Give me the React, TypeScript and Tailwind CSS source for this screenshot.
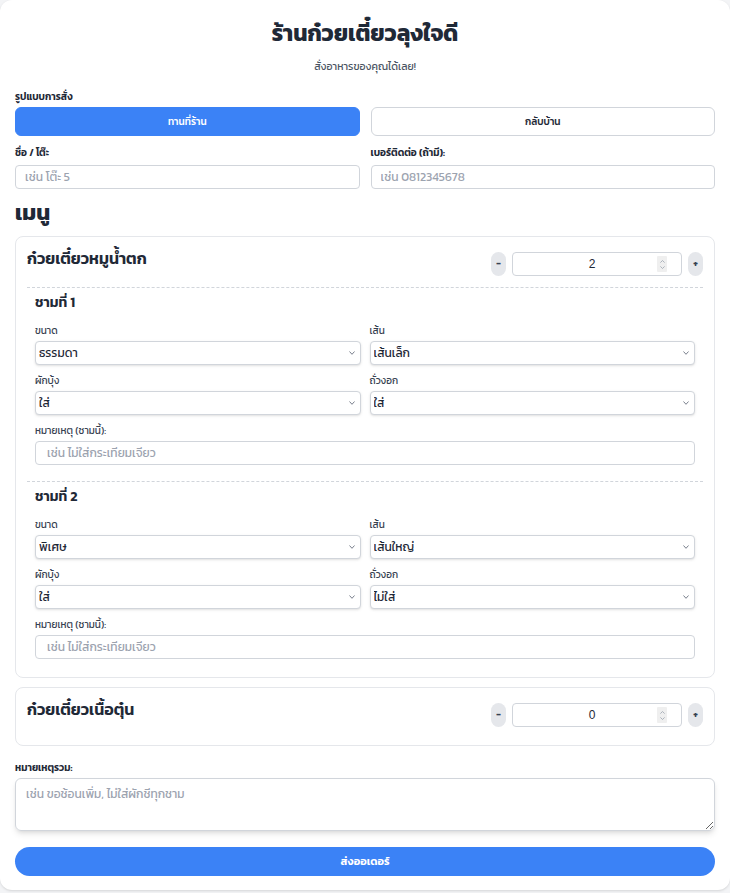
import { useState } from "react";

interface Bowl {
  size: string;
  noodle: string;
  veg: string;
  sprout: string;
  note: string;
}

const sizes = ["ธรรมดา", "พิเศษ"];
const noodles = ["เส้นเล็ก", "เส้นใหญ่", "เส้นหมี่", "บะหมี่", "วุ้นเส้น"];
const yesNo = ["ใส่", "ไม่ใส่"];

const Field = ({ label, children }: { label: string; children: React.ReactNode }) => (
  <div className="flex flex-col">
    <label className="text-[10px] leading-[14px] text-[#374151] mb-[3px]">{label}</label>
    {children}
  </div>
);

// native select, small grey chevron like the browser one
const Select = ({ value, options }: { value: string; options: string[] }) => (
  <div className="relative">
    <select
      defaultValue={value}
      className="block appearance-none w-full h-[24px] border border-[#d1d5db] rounded-[4px] bg-white pl-[3px] pr-[16px] text-[12px] text-[#1f2937] shadow-sm"
    >
      {options.map((o) => (
        <option key={o}>{o}</option>
      ))}
    </select>
    <svg
      className="absolute right-[6px] top-[10px] pointer-events-none"
      width="6"
      height="4"
      viewBox="0 0 6 4"
      fill="none"
    >
      <path d="M0.5 0.5 L3 3.3 L5.5 0.5" stroke="#6b7280" strokeWidth="0.9" />
    </svg>
  </div>
);

const Stepper = ({ value }: { value: number }) => (
  <div className="flex items-center gap-[6px]">
    <button className="w-[15px] h-[24px] rounded-full bg-[#e5e7eb] text-[10px] font-bold text-[#374151] leading-none">
      -
    </button>
    <div className="relative">
      <input
        type="number"
        defaultValue={value}
        className="block w-[170px] h-[24px] border border-[#d1d5db] rounded-[4px] bg-white pl-[6px] pr-[16px] text-center text-[12px] text-[#1f2937] font-['Liberation_Sans',sans-serif] [appearance:textfield] [&::-webkit-inner-spin-button]:appearance-none"
      />
      {/* spin arrows */}
      <div className="absolute right-[15px] top-[4px] w-[10px] h-[16px] bg-[#efefef] rounded-[1px] flex flex-col items-center justify-center gap-[3px] pointer-events-none">
        <svg width="5" height="3" viewBox="0 0 5 3" fill="none">
          <path d="M0.4 2.6 L2.5 0.5 L4.6 2.6" stroke="#9ca3af" strokeWidth="0.8" />
        </svg>
        <svg width="5" height="3" viewBox="0 0 5 3" fill="none">
          <path d="M0.4 0.4 L2.5 2.5 L4.6 0.4" stroke="#9ca3af" strokeWidth="0.8" />
        </svg>
      </div>
    </div>
    <button className="w-[15px] h-[24px] rounded-full bg-[#e5e7eb] text-[10px] font-bold text-[#374151] leading-none">
      +
    </button>
  </div>
);

const BowlForm = ({ index, bowl, first }: { index: number; bowl: Bowl; first: boolean }) => (
  <div
    className={
      first
        ? "mt-[6px] border-t border-dashed border-[#d1d5db] px-[8px] pt-[6px] pb-[5px]"
        : "mt-[11px] border-t border-dashed border-[#d1d5db] px-[8px] pt-[6px] pb-[5px]"
    }
  >
    <h4 className="text-[14px] leading-[18px] font-semibold text-[#1f2937] mb-[12px]">ชามที่ {index}</h4>
    <div className="grid grid-cols-2 gap-x-[9px] gap-y-[9px]">
      <Field label="ขนาด">
        <Select value={bowl.size} options={sizes} />
      </Field>
      <Field label="เส้น">
        <Select value={bowl.noodle} options={noodles} />
      </Field>
      <Field label="ผักบุ้ง">
        <Select value={bowl.veg} options={yesNo} />
      </Field>
      <Field label="ถั่วงอก">
        <Select value={bowl.sprout} options={yesNo} />
      </Field>
      <div className="col-span-2">
        <Field label="หมายเหตุ (ชามนี้):">
          <input
            placeholder="เช่น ไม่ใส่กระเทียมเจียว"
            defaultValue={bowl.note}
            className="block w-full h-[24px] border border-[#d1d5db] rounded-[4px] bg-white px-[11px] text-[12px] text-[#1f2937] placeholder:text-[#9ca3af]"
          />
        </Field>
      </div>
    </div>
  </div>
);

const menu = [
  {
    name: "ก๋วยเตี๋ยวหมูน้ำตก",
    bowls: [
      { size: "ธรรมดา", noodle: "เส้นเล็ก", veg: "ใส่", sprout: "ใส่", note: "" },
      { size: "พิเศษ", noodle: "เส้นใหญ่", veg: "ใส่", sprout: "ไม่ใส่", note: "" },
    ],
  },
  { name: "ก๋วยเตี๋ยวเนื้อตุ๋น", bowls: [] as Bowl[] },
];

export default function App() {
  const [orderType, setOrderType] = useState("dine-in");

  return (
    <div className="min-h-screen bg-[#f3f4f6] font-['Kanit',sans-serif] text-[#1f2937]">
      <div className="bg-white rounded-[12px] shadow-sm px-[15px] pt-[15px] pb-[14px]">
        <h1 className="text-center text-[22.5px] leading-[36px] font-bold text-[#1f2937] mb-[6px]">
          ร้านก๋วยเตี๋ยวลุงใจดี
        </h1>
        <p className="text-center text-[10.5px] leading-[18px] text-[#4b5563] mb-[15px]">สั่งอาหารของคุณได้เลย!</p>

        {/* order type */}
        <label className="block text-[10px] leading-[14px] font-semibold mb-[3px]">รูปแบบการสั่ง</label>
        <div className="grid grid-cols-2 gap-[11px]">
          <button
            onClick={() => setOrderType("dine-in")}
            className={
              orderType === "dine-in"
                ? "h-[29px] rounded-[6px] bg-[#3b82f6] text-white text-[10px] font-medium border border-[#3b82f6]"
                : "h-[29px] rounded-[6px] bg-white text-[#1f2937] text-[10px] font-medium border border-[#d1d5db]"
            }
          >
            ทานที่ร้าน
          </button>
          <button
            onClick={() => setOrderType("takeaway")}
            className={
              orderType === "takeaway"
                ? "h-[29px] rounded-[6px] bg-[#3b82f6] text-white text-[10px] font-medium border border-[#3b82f6]"
                : "h-[29px] rounded-[6px] bg-white text-[#1f2937] text-[10px] font-medium border border-[#d1d5db]"
            }
          >
            กลับบ้าน
          </button>
        </div>

        {/* customer */}
        <div className="grid grid-cols-2 gap-[11px] mt-[10px]">
          <div className="flex flex-col">
            <label className="text-[10px] leading-[14px] font-semibold mb-[5px]">ชื่อ / โต๊ะ</label>
            <input
              placeholder="เช่น โต๊ะ 5"
              className="block h-[24px] border border-[#d1d5db] rounded-[4px] px-[9px] text-[12px] placeholder:text-[#9ca3af]"
            />
          </div>
          <div className="flex flex-col">
            <label className="text-[10px] leading-[14px] font-semibold mb-[5px]">เบอร์ติดต่อ (ถ้ามี):</label>
            <input
              placeholder="เช่น 0812345678"
              className="block h-[24px] border border-[#d1d5db] rounded-[4px] px-[9px] text-[12px] placeholder:text-[#9ca3af]"
            />
          </div>
        </div>

        <h2 className="text-[22px] leading-[28px] font-bold mt-[10px] mb-[9px]">เมนู</h2>

        <div className="flex flex-col gap-[9px]">
          {menu.map((item) => (
            <div key={item.name} className="border border-[#e5e7eb] rounded-[8px] px-[11px] pt-[10px] pb-[13px]">
              <div className="flex items-center justify-between">
                <h3 className="text-[16px] leading-[22px] font-semibold self-start mb-[12px]">{item.name}</h3>
                <Stepper value={item.bowls.length} />
              </div>
              {item.bowls.map((b, i) => (
                <BowlForm key={i} index={i + 1} bowl={b} first={i === 0} />
              ))}
            </div>
          ))}
        </div>

        <label className="block text-[10px] leading-[14px] font-semibold mt-[15px] mb-[3px]">หมายเหตุรวม:</label>
        <textarea
          placeholder="เช่น ขอช้อนเพิ่ม, ไม่ใส่ผักชีทุกชาม"
          className="block w-full h-[53px] border border-[#d1d5db] rounded-[6px] px-[10px] py-[6px] text-[12px] shadow-md placeholder:text-[#9ca3af]"
        />

        <button className="w-full h-[29px] mt-[16px] rounded-full bg-[#3b82f6] text-white text-[11px] font-semibold">
          ส่งออเดอร์
        </button>
      </div>
    </div>
  );
}
